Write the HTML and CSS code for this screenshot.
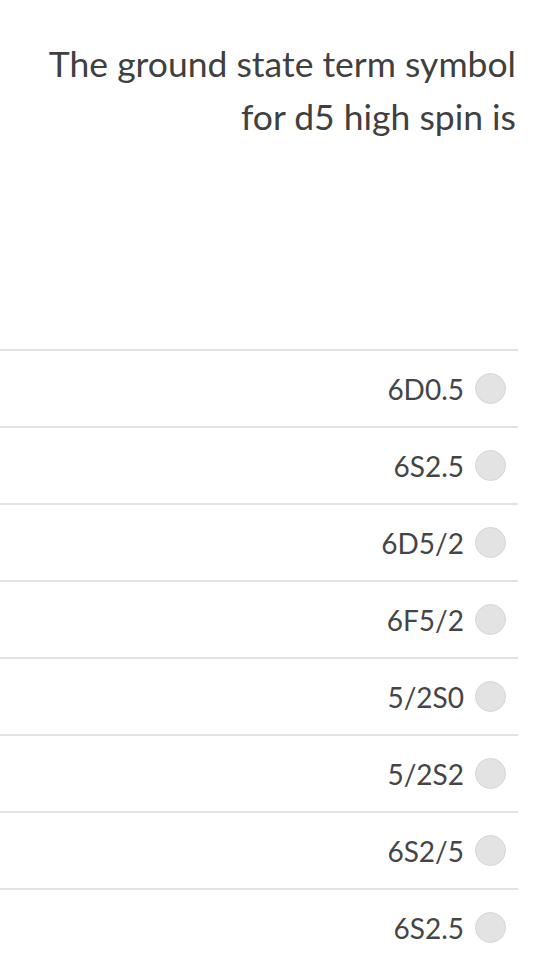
FILE: index.html
```html
<!DOCTYPE html>
<html lang="en">
<head>
    <meta charset="UTF-8">
    <title>Question</title>

    <link rel="stylesheet" href="styles.css">
</head>
<body>

<div class="quiz">
    <h1 class="quiz__question">The ground state term symbol for d5 high spin is</h1>

    <form action="#" class="answers" name="answers">
        <label class="answers__item">6D0.5 <input type="radio" name="answer" class="answers__radio"></label>
        <label class="answers__item">6S2.5 <input type="radio" name="answer" class="answers__radio"></label>
        <label class="answers__item">6D5/2 <input type="radio" name="answer" class="answers__radio"></label>
        <label class="answers__item">6F5/2 <input type="radio" name="answer" class="answers__radio"></label>
        <label class="answers__item">5/2S0 <input type="radio" name="answer" class="answers__radio"></label>
        <label class="answers__item">5/2S2 <input type="radio" name="answer" class="answers__radio"></label>
        <label class="answers__item">6S2/5 <input type="radio" name="answer" class="answers__radio"></label>
        <label class="answers__item">6S2.5 <input type="radio" name="answer" class="answers__radio"></label>
    </form>
</div>

</body>
</html>
```

FILE: styles.css
```css
body{
    margin: 0;
    background-color: #fff;
    font-family: Lato, "Open Sans", sans-serif;
}
.quiz{
    width: 518px;
}
.quiz__question{
    margin: 0;
    padding: 37px 2px 0 40px;
    font-size: 35.5px;
    font-weight: normal;
    line-height: 53px;
    text-align: right;
    color: #404040;
}
.answers{
    margin-top: 206px;
}
.answers__item{
    display: flex;
    align-items: center;
    justify-content: flex-end;
    gap: 11px;
    height: 75px;
    padding-right: 12px;
    border-top: 2px solid #e3e3e3;
    font-size: 28px;
    color: #454545;
    cursor: pointer;
}
.answers__radio{
    appearance: none;
    margin: 0;
    width: 31px;
    height: 31px;
    border-radius: 50%;
    border: 1px solid #d6d6d6;
    background-color: #e3e3e3;
    cursor: pointer;
}
```
